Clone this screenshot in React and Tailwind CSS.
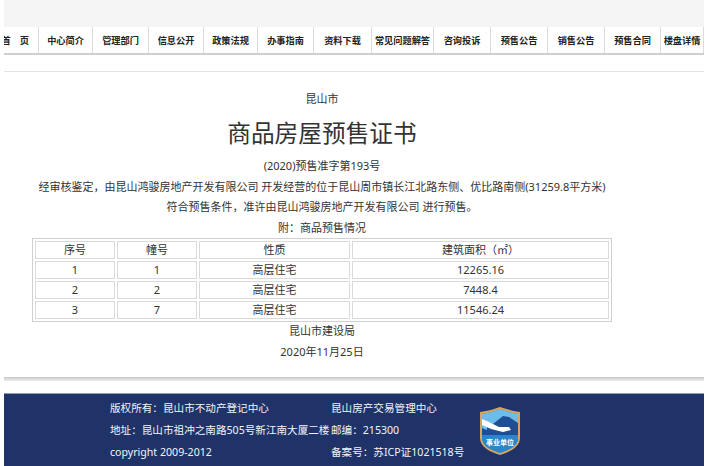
const F = { fontFamily: '"Noto Sans", "Noto Sans CJK SC", sans-serif' };

const nav = [
  ['首　页', 35, 'justify-end pr-[9px]'],
  ['中心简介', 54],
  ['管理部门', 56],
  ['信息公开', 55],
  ['政策法规', 54],
  ['办事指南', 56],
  ['资料下载', 58],
  ['常见问题解答', 62],
  ['咨询投诉', 57],
  ['预售公告', 57],
  ['销售公告', 57],
  ['预售合同', 56],
  ['楼盘详情', 43],
];

const rows = [
  ['1', '1', '高层住宅', '12265.16'],
  ['2', '2', '高层住宅', '7448.4'],
  ['3', '7', '高层住宅', '11546.24'],
];

function Shield() {
  return (
    <svg width="42" height="50" viewBox="0 0 42 50" className="shrink-0">
      <path d="M1 6 C9 5 15 3 21 1 C27 3 33 5 41 6 L41 32 C41 41 31 46 21 49 C11 46 1 41 1 32 Z" fill="#d9a45c" />
      <path d="M3 8 C10 7 16 5 21 3 C26 5 32 7 39 8 L39 32 C39 40 30 44 21 47 C12 44 3 40 3 32 Z" fill="#2f8fd0" />
      <path d="M3 8 C10 7 16 5 21 3 C26 5 32 7 39 8 L39 24 L3 24 Z" fill="#6cbcec" />
      <path d="M8 16 L14 18 L24 10 L30 11 L39 17 L39 29 L8 29 Z" fill="#1f4d96" />
      <path d="M3 13 L10 16 L20 21 L30 21 L32 24 L24 26 L12 23 L3 19 Z" fill="#ffffff" />
      <path d="M3 22 L12 26 L24 29 L3 29 Z" fill="#1f4d96" />
      <path d="M3 29 L39 29 L39 32 C39 40 30 44 21 47 C12 44 3 40 3 32 Z" fill="#2a86cc" />
      <text x="21" y="38.5" textAnchor="middle" fontSize="7" fontWeight="700" fill="#ffffff" style={F}>事业单位</text>
    </svg>
  );
}

export default function App() {
  return (
    <div className="ml-[4px] w-[700px] h-[466px] overflow-hidden bg-white text-[#333]" style={F}>
      <div className="h-[27px] bg-[#f5f5f5]" />
      <nav className="flex h-[28px] border-b-2 border-[#cfcfcf] overflow-hidden text-[9.2px] font-bold text-[#222]">
        {nav.map(([t, w, extra]) => (
          <div
            key={t}
            style={{ width: w }}
            className={`shrink-0 flex items-center pt-[2px] whitespace-nowrap border-r border-[#dcdcdc] ${extra || 'justify-center'}`}
          >
            {t}
          </div>
        ))}
      </nav>
      <div className="mt-[16px] border-t border-[#e3e3e3] h-[306px]">
        <div className="w-[636px]">
          <div className="flex flex-col items-center text-[11px]">
            <p className="mt-[19px] leading-[16px]">昆山市</p>
            <h1 className="mt-[9px] text-[23.7px] leading-[34px] font-normal">商品房屋预售证书</h1>
            <p className="mt-[8px] leading-[16px]">(2020)预售准字第193号</p>
            <p className="mt-[5px] leading-[16px] whitespace-nowrap">经审核鉴定，由昆山鸿骏房地产开发有限公司 开发经营的位于昆山周市镇长江北路东侧、优比路南侧(31259.8平方米)</p>
            <p className="mt-[4px] leading-[16px]">符合预售条件，准许由昆山鸿骏房地产开发有限公司 进行预售。</p>
            <p className="mt-[5px] leading-[16px]">附：商品预售情况</p>
          </div>
          <table className="ml-[28px] mt-[2px] w-[580px] table-fixed border border-[#d0d0d0] border-separate border-spacing-[2px] text-[11px] text-center">
            <colgroup>
              <col className="w-[80px]" />
              <col className="w-[80px]" />
              <col className="w-[151px]" />
              <col />
            </colgroup>
            <thead>
              <tr>
                {['序号', '幢号', '性质', '建筑面积（㎡）'].map((h) => (
                  <th key={h} className="h-[18px] p-0 font-normal border border-[#dadada] leading-[14px]">{h}</th>
                ))}
              </tr>
            </thead>
            <tbody>
              {rows.map((r) => (
                <tr key={r[0]}>
                  {r.map((c, i) => (
                    <td key={i} className="h-[18px] p-0 border border-[#dadada] leading-[14px]">{c}</td>
                  ))}
                </tr>
              ))}
            </tbody>
          </table>
          <div className="flex flex-col items-center text-[11px]">
            <p className="mt-[1px] leading-[16px]">昆山市建设局</p>
            <p className="mt-[5px] leading-[16px]">2020年11月25日</p>
          </div>
        </div>
      </div>
      <div className="h-[4px] bg-gradient-to-b from-[#c8c8c8] to-[#eeeeee]" />
      <footer className="mt-[12px] h-[73px] bg-[#1f3369] border-t border-[#8f9bbb] flex text-[10.6px] text-[#f2f4f8]">
        <div className="ml-[106px] w-[221px] shrink-0 pt-[3px] leading-[22px] whitespace-nowrap">
          <p>版权所有：昆山市不动产登记中心</p>
          <p>地址：昆山市祖冲之南路505号新江南大厦二楼</p>
          <p>copyright 2009-2012</p>
        </div>
        <div className="w-[148px] shrink-0 pt-[3px] leading-[22px] whitespace-nowrap">
          <p>昆山房产交易管理中心</p>
          <p>邮编：215300</p>
          <p>备案号：苏ICP证1021518号</p>
        </div>
        <div className="pt-[12px]">
          <Shield />
        </div>
      </footer>
    </div>
  );
}
